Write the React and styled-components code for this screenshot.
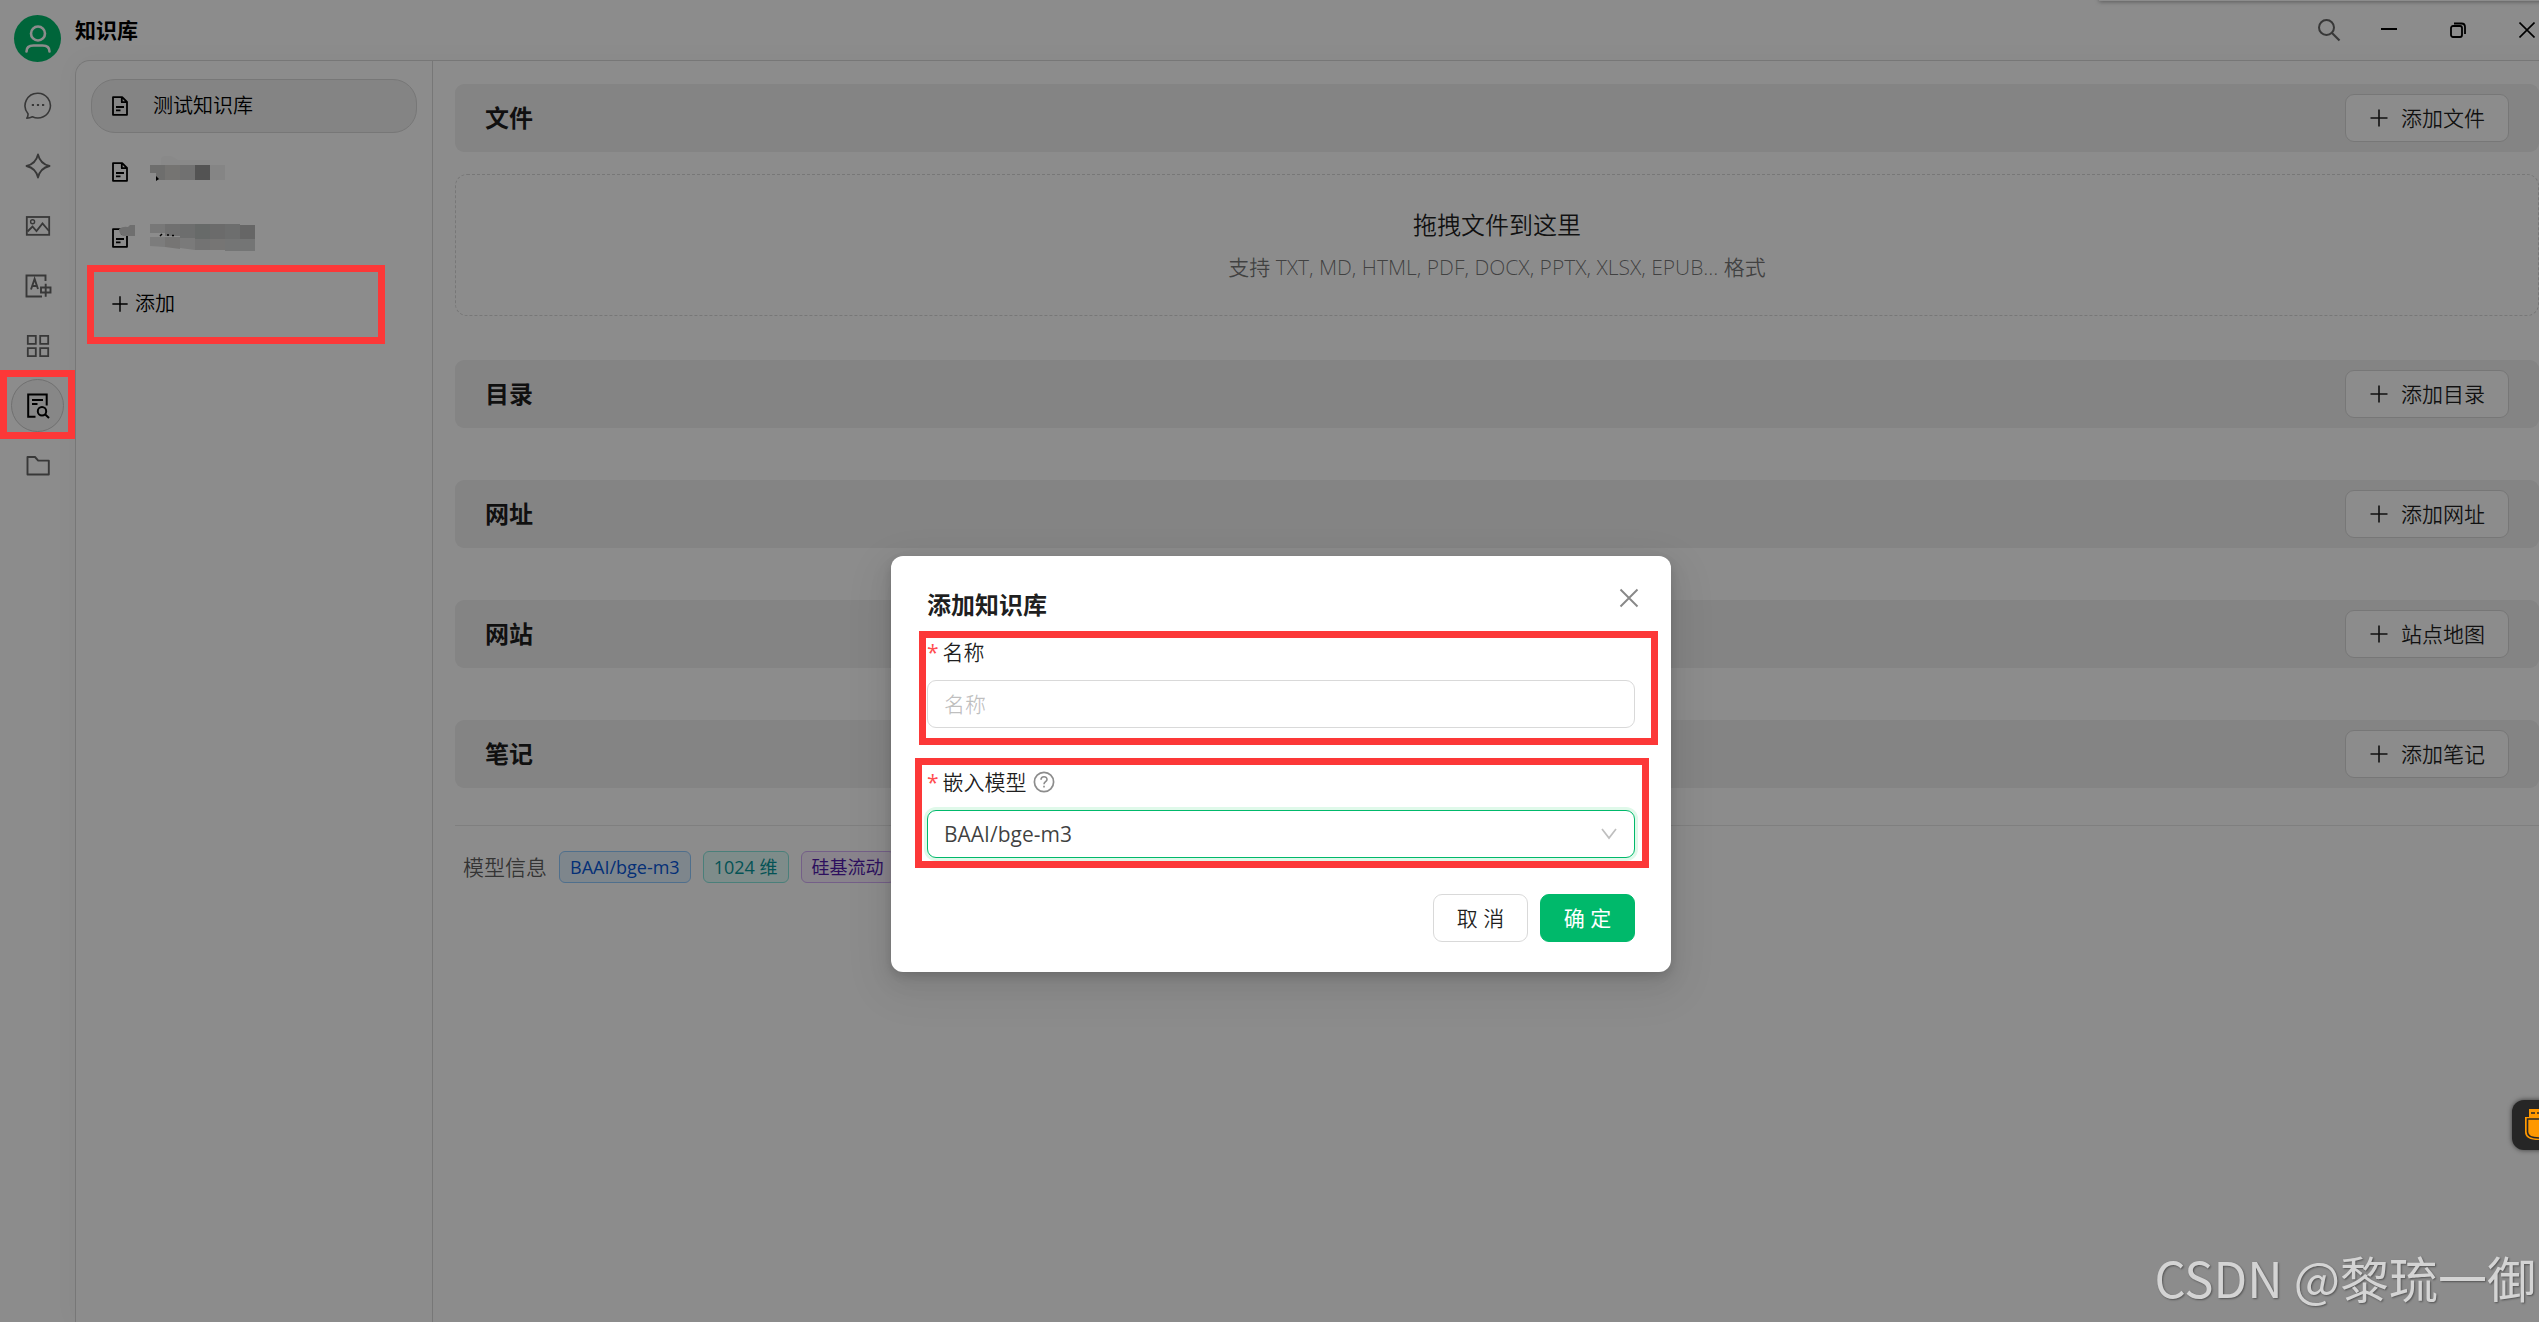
import { useState } from 'react';
import styled, { createGlobalStyle, css } from 'styled-components';

const sections = [
  { title: '目录', action: '添加目录' },
  { title: '网址', action: '添加网址' },
  { title: '网站', action: '站点地图' },
  { title: '笔记', action: '添加笔记' },
];

const PlusIcon = ({ size = 20 }) => (
  <svg width={size} height={size} viewBox="0 0 20 20" fill="none">
    <path d="M10 1.5v17M1.5 10h17" stroke="currentColor" strokeWidth="1.6" />
  </svg>
);

const DocIcon = () => (
  <svg width="18" height="20" viewBox="0 0 18 20" fill="none">
    <path
      d="M2 1.2h9.2L16 6v12.8H2zM10.8 1.2v5H16M5 11h8M5 14.4h4.5"
      stroke="currentColor"
      strokeWidth="1.8"
      strokeLinejoin="round"
    />
  </svg>
);

const UserIcon = () => (
  <svg width="48" height="48" viewBox="0 0 48 48" fill="none">
    <circle cx="24" cy="18.5" r="7" stroke="#fff" strokeWidth="2.6" />
    <path
      d="M12.5 36.5c0-4 3-6 7-6h9c4 0 7 2 7 6"
      stroke="#fff"
      strokeWidth="2.6"
      strokeLinecap="round"
    />
  </svg>
);

const ChatIcon = () => (
  <svg width="28" height="28" viewBox="0 0 28 28" fill="none">
    <path
      d="M14 1.2a12.6 12.4 0 1 1-5.6 23.6c-1.8.9-3.6 1.3-5.6 1.4 1-1.5 1.4-2.8 1.2-4.5A12.5 12.5 0 0 1 14 1.2z"
      stroke="currentColor"
      strokeWidth="1.6"
      strokeLinejoin="round"
    />
    <path d="M7.8 13h2.2M12.9 13h2.2M18 13h2.2" stroke="currentColor" strokeWidth="2" />
  </svg>
);

const SparkleIcon = () => (
  <svg width="28" height="28" viewBox="0 0 28 28" fill="none">
    <path
      d="M14 2.5c1.5 6.5 5 10 11.5 11.5C19 15.5 15.5 19 14 25.5 12.5 19 9 15.5 2.5 14 9 12.5 12.5 9 14 2.5z"
      stroke="currentColor"
      strokeWidth="1.8"
      strokeLinejoin="round"
    />
  </svg>
);

const PictureIcon = () => (
  <svg width="28" height="28" viewBox="0 0 28 28" fill="none">
    <rect x="2.8" y="5" width="22.4" height="17.8" stroke="currentColor" strokeWidth="1.8" />
    <circle cx="8.6" cy="9.7" r="2" stroke="currentColor" strokeWidth="1.4" />
    <path d="M3.5 19.5l5-5 4 4.5 6-7.5 6.5 7.5" stroke="currentColor" strokeWidth="1.8" />
  </svg>
);

const TranslateIcon = () => (
  <svg width="28" height="28" viewBox="0 0 28 28" fill="none">
    <path
      d="M21.5 9V3.5h-19v21H18M7 17.5l3.6-10.5 3.4 10M8.2 14h4.6"
      stroke="currentColor"
      strokeWidth="1.9"
    />
    <path d="M17 15.5h9.5v5H17zM21.7 11.8v13" stroke="currentColor" strokeWidth="1.9" />
  </svg>
);

const GridIcon = () => (
  <svg width="28" height="28" viewBox="0 0 28 28" fill="none">
    <path
      d="M3.8 3.8h8v8h-8zM16.2 3.8h8v8h-8zM3.8 16.2h8v8h-8zM16.2 16.2h8v8h-8z"
      stroke="currentColor"
      strokeWidth="1.8"
    />
  </svg>
);

const KnowledgeIcon = () => (
  <svg width="28" height="28" viewBox="0 0 28 28" fill="none">
    <path
      d="M11.5 24.8H4.2V2.5h18.5v11M8 8h11M8 12h5.5"
      stroke="currentColor"
      strokeWidth="2"
    />
    <circle cx="18" cy="19.3" r="4.2" stroke="currentColor" strokeWidth="2" />
    <path d="M21 22.3l4 3.7" stroke="currentColor" strokeWidth="2" />
  </svg>
);

const FolderIcon = () => (
  <svg width="28" height="28" viewBox="0 0 28 28" fill="none">
    <path
      d="M3.5 5h7.5l3.2 3.6h10.6V22.5H3.5z"
      stroke="currentColor"
      strokeWidth="1.9"
      strokeLinejoin="round"
    />
  </svg>
);

const ShortMosaic = () => (
  <svg width="78" height="32" viewBox="0 0 78 32">
    <path d="M11 2q6-6 17 2h32v6H11z" fill="#fafafa" />
    <path d="M0 9h15v15H6v-7H0z" fill="#c9c9c6" />
    <path d="M6 20l3 3-3 2z" fill="#000" />
    <path d="M15 9h15v15H15z" fill="#d6d4d0" />
    <path d="M30 9h15v15H30z" fill="#cecece" />
    <path d="M45 9h15v15H45z" fill="#979797" />
    <path d="M60 9h15v15H60z" fill="#f2f2f2" />
  </svg>
);

const LongMosaic = () => (
  <svg width="108" height="28" viewBox="0 0 108 28">
    <path d="M0 0h15v9H0z" fill="#dadada" />
    <path d="M15 0h15v12H15z" fill="#ccc" />
    <path d="M30 0h15v14H30zM75 0h15v15H75z" fill="#c6c8c8" />
    <path d="M45 0h15v15H45z" fill="#bcc2c0" />
    <path d="M60 0h15v15H60z" fill="#c4c4c4" />
    <path d="M90 1h15v14H90z" fill="#bababa" />
    <path d="M0 13h15v10l-15-1z" fill="#e2e2e2" />
    <path d="M15 13h15v12l-15-2zM60 15h15v11H60z" fill="#d8d6d4" />
    <path d="M30 14h15v12l-15-2z" fill="#dedede" />
    <path d="M45 15h15v11H45z" fill="#d2d2d2" />
    <path d="M75 15h15v12H75zM90 15h15v12H90z" fill="#d4d6d6" />
    <path d="M10 12l2-2M17 11h2M22 11.5h2" stroke="#000" strokeWidth="1.5" />
  </svg>
);

const navItems = [
  { name: '聊天', icon: <ChatIcon /> },
  { name: '智能体', icon: <SparkleIcon /> },
  { name: '绘画', icon: <PictureIcon /> },
  { name: '翻译', icon: <TranslateIcon /> },
  { name: '小程序', icon: <GridIcon /> },
  { name: '知识库', icon: <KnowledgeIcon />, active: true },
  { name: '文件', icon: <FolderIcon /> },
];

const SectionHead = ({ title, action }) => (
  <SectionBar>
    <SectionTitle>{title}</SectionTitle>
    <AddButton type="button">
      <PlusIcon />
      {action}
    </AddButton>
  </SectionBar>
);

const AddDialog = () => {
  const [name, setName] = useState('');
  const [model, setModel] = useState('BAAI/bge-m3');

  return (
    <Dialog role="dialog" aria-labelledby="dialog-title">
      <CloseButton type="button" aria-label="关闭">
        <svg width="20" height="20" viewBox="0 0 20 20">
          <path d="M1.5 1.5l17 17M18.5 1.5l-17 17" stroke="#888" strokeWidth="1.9" />
        </svg>
      </CloseButton>
      <DialogTitle id="dialog-title">添加知识库</DialogTitle>
      <Fields>
        <Field>
          <Label htmlFor="kb-name">
            <Required>*</Required>名称
          </Label>
          <TextInput
            id="kb-name"
            placeholder="名称"
            value={name}
            onChange={(e) => setName(e.target.value)}
          />
          <NameMark />
        </Field>
        <Field>
          <Label htmlFor="kb-model">
            <Required>*</Required>嵌入模型
            <HelpIcon width="22" height="22" viewBox="0 0 22 22" fill="none">
              <circle cx="11" cy="11" r="9.6" stroke="#8c8c8c" strokeWidth="1.7" />
              <path
                d="M8 8.8c0-4 6-4 6-.4 0 2.3-3 2.3-3 4.8M11 14.8v1.6"
                stroke="#8c8c8c"
                strokeWidth="1.6"
              />
            </HelpIcon>
          </Label>
          <SelectWrap>
            <Select id="kb-model" value={model} onChange={(e) => setModel(e.target.value)}>
              <option>BAAI/bge-m3</option>
            </Select>
            <Arrow width="16" height="12" viewBox="0 0 16 12" fill="none">
              <path d="M1 1l7 9 7-9" stroke="#bfbfbf" strokeWidth="1.7" />
            </Arrow>
          </SelectWrap>
          <ModelMark />
        </Field>
      </Fields>
      <Footer>
        <DialogButton type="button">取 消</DialogButton>
        <DialogButton type="button" $primary>
          确 定
        </DialogButton>
      </Footer>
    </Dialog>
  );
};

const App = () => {
  return (
    <Viewport>
      <GlobalStyle />
      <Window>
        <Sidebar>
          <Avatar>
            <UserIcon />
          </Avatar>
          <Nav>
            {navItems.map((item) => (
              <NavButton key={item.name} type="button" aria-label={item.name} $active={item.active}>
                {item.icon}
                {item.active && <NavMark />}
              </NavButton>
            ))}
          </Nav>
        </Sidebar>
        <Body>
          <TopBar>
            <PageTitle>知识库</PageTitle>
            <SearchButton type="button" aria-label="搜索">
              <svg width="24" height="24" viewBox="0 0 24 24" fill="none">
                <circle cx="9.5" cy="9.5" r="7.5" stroke="currentColor" strokeWidth="2" />
                <path d="M14.5 14.5l8 8" stroke="currentColor" strokeWidth="2.2" />
              </svg>
            </SearchButton>
            <WindowButton type="button" aria-label="最小化">
              <svg width="16" height="16" viewBox="0 0 16 16">
                <path d="M0 7h16" stroke="#000" strokeWidth="2" />
              </svg>
            </WindowButton>
            <WindowButton type="button" aria-label="还原">
              <svg width="16" height="16" viewBox="0 0 16 16" fill="none">
                <rect x="1" y="4" width="11" height="11" rx="2" stroke="#000" strokeWidth="1.8" />
                <path d="M4 1.5h7.5q3.5 0 3.5 3.5v7" stroke="#000" strokeWidth="1.8" />
              </svg>
            </WindowButton>
            <WindowButton type="button" aria-label="关闭窗口">
              <svg width="16" height="16" viewBox="0 0 16 16">
                <path d="M.5.5l15 15M15.5.5l-15 15" stroke="#000" strokeWidth="1.6" />
              </svg>
            </WindowButton>
          </TopBar>
          <Panel>
            <BaseList>
              <BaseItem type="button" $active>
                <DocIcon />
                测试知识库
              </BaseItem>
              <BaseItem type="button" aria-label="知识库二">
                <DocIcon />
                <MosaicSlot>
                  <ShortMosaic />
                </MosaicSlot>
              </BaseItem>
              <BaseItem type="button" aria-label="知识库三">
                <DocIcon />
                <IconSmudge width="18" height="12" viewBox="0 0 18 12">
                  <path d="M1 4q4-3 9-2l2-2h5v11H5q-4-2-4-7z" fill="#cacaca" />
                </IconSmudge>
                <MosaicSlot>
                  <LongMosaic />
                </MosaicSlot>
              </BaseItem>
              <NewBase type="button">
                <PlusIcon size={18} />
                添加
                <NewMark />
              </NewBase>
            </BaseList>
            <Content>
              <SectionHead title="文件" action="添加文件" />
              <DropZone>
                <DropTitle>拖拽文件到这里</DropTitle>
                <DropHint>支持 TXT, MD, HTML, PDF, DOCX, PPTX, XLSX, EPUB... 格式</DropHint>
              </DropZone>
              <SectionList>
                {sections.map((section) => (
                  <SectionHead key={section.title} {...section} />
                ))}
              </SectionList>
              <ModelInfo>
                <InfoLabel>模型信息</InfoLabel>
                <Tag $color="#0958d9" $bg="#e6f4ff" $border="#91caff">
                  BAAI/bge-m3
                </Tag>
                <Tag $color="#08979c" $bg="#e6fffb" $border="#87e8de">
                  1024 维
                </Tag>
                <Tag $color="#531dab" $bg="#f9f0ff" $border="#d3adf7">
                  硅基流动
                </Tag>
              </ModelInfo>
            </Content>
          </Panel>
        </Body>
        <TopShade />
        <Mask>
          <AddDialog />
        </Mask>
        <FloatTool type="button" aria-label="工具">
          <svg width="28" height="32" viewBox="0 0 28 32">
            <path d="M4 0h20v8h4v15q0 8-14 8T0 23V8h4z" fill="#ff9800" />
            <path
              d="M2.5 10h23v13q0 6-11.5 6T2.5 23zM6 4h4M12 4h4M18 4h4"
              fill="none"
              stroke="#262626"
              strokeWidth="1.6"
            />
          </svg>
        </FloatTool>
        <Watermark>CSDN @黎琉一御</Watermark>
      </Window>
    </Viewport>
  );
};

export default App;

const GlobalStyle = createGlobalStyle`
  * {
    box-sizing: border-box;
  }

  body {
    margin: 0;
    background: #fff;
  }

  body, button, input, select {
    font-family: "Open Sans", "Noto Sans CJK SC", sans-serif;
    font-weight: 350;
    color: rgba(0, 0, 0, 0.88);
  }

  button {
    padding: 0;
    border: none;
    background: none;
    cursor: pointer;
  }

  svg {
    display: block;
    flex-shrink: 0;
  }
`;

const Viewport = styled('div')`
  overflow: hidden;
`;

/* the window hangs a little over the right edge of the screen */
const Window = styled('div')`
  position: relative;
  display: flex;
  width: calc(100% + 23px);
  min-height: 100vh;
`;

const Sidebar = styled('aside')`
  display: flex;
  flex-direction: column;
  align-items: center;
  gap: 17px;
  width: 75px;
  padding-top: 15px;
  flex-shrink: 0;
`;

const Avatar = styled('div')`
  display: flex;
  align-items: center;
  justify-content: center;
  width: 47px;
  height: 47px;
  border-radius: 50%;
  background: #00b96b;
`;

const Nav = styled('nav')`
  display: flex;
  flex-direction: column;
  gap: 7px;
`;

const NavButton = styled('button')`
  position: relative;
  display: flex;
  align-items: center;
  justify-content: center;
  width: 53px;
  height: 53px;
  border: 1px solid transparent;
  border-radius: 50%;
  color: #666;

  ${({ $active }) =>
    $active &&
    css`
      border-color: #ccc;
      background: #f6f6f6;
      color: #000;
    `}
`;

const Mark = styled('span')`
  position: absolute;
  z-index: 20;
  border: 7px solid #fc3838;
  pointer-events: none;
`;

const NavMark = styled(Mark)`
  inset: -10px -12px -8px -12px;
`;

const NewMark = styled(Mark)`
  inset: -13px 31px -14px -5px;
`;

const NameMark = styled(Mark)`
  inset: -5px -23px -17px -8px;
`;

const ModelMark = styled(Mark)`
  inset: -8px -14px -10px -12px;
`;

const Body = styled('div')`
  display: flex;
  flex-direction: column;
  flex: 1;
  min-width: 0;
`;

const TopBar = styled('header')`
  display: flex;
  align-items: center;
  height: 60px;
  padding-right: 1px;
`;

const PageTitle = styled('h1')`
  flex: 1;
  margin: 0;
  font-size: 21px;
  line-height: 32px;
  font-weight: 700;
  color: #000;
`;

const SearchButton = styled('button')`
  display: flex;
  align-items: center;
  justify-content: center;
  width: 50px;
  height: 48px;
  color: #666;
`;

const WindowButton = styled('button')`
  display: flex;
  align-items: center;
  justify-content: center;
  width: 69px;
  height: 60px;
`;

const Panel = styled('main')`
  display: flex;
  flex: 1;
  border-top: 1px solid #d9d9d9;
  border-left: 1px solid #d9d9d9;
  border-top-left-radius: 15px;
  box-shadow: 0 0 24px rgba(0, 0, 0, 0.04);
`;

const BaseList = styled('div')`
  display: flex;
  flex-direction: column;
  gap: 12px;
  width: 357px;
  padding: 18px 15px;
  border-right: 1px solid #d9d9d9;
  flex-shrink: 0;
`;

const BaseItem = styled('button')`
  position: relative;
  display: flex;
  align-items: center;
  gap: 24px;
  height: 54px;
  padding: 0 19px;
  border: 1px solid transparent;
  border-radius: 24px;
  font-size: 20px;
  line-height: 30px;
  color: #000;

  ${({ $active }) =>
    $active &&
    css`
      border-color: #d9d9d9;
      background: #f0f0f0;
    `}
`;

const MosaicSlot = styled('span')`
  display: flex;
  margin-left: -3px;
`;

const IconSmudge = styled('svg')`
  position: absolute;
  top: 13px;
  left: 26px;
`;

const NewBase = styled(BaseItem)`
  gap: 6px;
`;

const Content = styled('div')`
  flex: 1;
  min-width: 0;
  padding: 23px 23px 23px 22px;
`;

const SectionBar = styled('div')`
  display: flex;
  align-items: center;
  justify-content: space-between;
  height: 68px;
  padding: 0 30px;
  border-radius: 9px;
  background: #f0f0f0;
`;

const SectionTitle = styled('h2')`
  margin: 0;
  font-size: 24px;
  line-height: 36px;
  font-weight: 700;
`;

const AddButton = styled('button')`
  display: flex;
  align-items: center;
  gap: 12px;
  height: 48px;
  padding: 0 23px;
  border: 1px solid #d9d9d9;
  border-radius: 9px;
  background: #fff;
  font-size: 21px;
  line-height: 32px;
`;

const DropZone = styled('div')`
  display: flex;
  flex-direction: column;
  align-items: center;
  justify-content: center;
  gap: 8px;
  height: 142px;
  margin-top: 22px;
  border: 1px dashed #d9d9d9;
  border-radius: 12px;
`;

const DropTitle = styled('p')`
  margin: 0;
  font-size: 24px;
  line-height: 36px;
`;

const DropHint = styled('p')`
  margin: 0;
  font-size: 21px;
  line-height: 32px;
  color: rgba(0, 0, 0, 0.55);
`;

const SectionList = styled('div')`
  display: flex;
  flex-direction: column;
  gap: 52px;
  margin-top: 44px;
`;

const ModelInfo = styled('div')`
  display: flex;
  align-items: center;
  gap: 12px;
  margin-top: 37px;
  padding: 25px 8px;
  border-top: 1px solid #e8e8e8;
`;

const InfoLabel = styled('span')`
  font-size: 21px;
  line-height: 32px;
  color: rgba(0, 0, 0, 0.65);
`;

const Tag = styled('span')`
  padding: 0 10px;
  border: 1px solid ${({ $border }) => $border};
  border-radius: 6px;
  background: ${({ $bg }) => $bg};
  color: ${({ $color }) => $color};
  font-size: 18px;
  font-weight: 400;
  line-height: 30px;
`;

const TopShade = styled('div')`
  position: absolute;
  top: -4px;
  right: 0;
  width: 463px;
  height: 5px;
  box-shadow: 0 1px 4px rgba(0, 0, 0, 0.35);
`;

const Mask = styled('div')`
  position: absolute;
  inset: 0;
  z-index: 10;
  display: flex;
  justify-content: center;
  align-items: flex-start;
  padding-top: 556px;
  background: rgba(0, 0, 0, 0.45);
`;

const Dialog = styled('div')`
  position: relative;
  width: 780px;
  padding: 31px 36px 30px;
  border-radius: 12px;
  background: #fff;
  box-shadow: 0 9px 24px rgba(0, 0, 0, 0.08), 0 4px 9px rgba(0, 0, 0, 0.12),
    0 14px 42px 12px rgba(0, 0, 0, 0.05);
`;

const CloseButton = styled('button')`
  position: absolute;
  top: 18px;
  right: 18px;
  display: flex;
  align-items: center;
  justify-content: center;
  width: 48px;
  height: 48px;
`;

const DialogTitle = styled('h2')`
  margin: 0 0 13px;
  font-size: 24px;
  line-height: 36px;
  font-weight: 700;
`;

const Fields = styled('div')`
  display: flex;
  flex-direction: column;
  gap: 38px;
`;

const Field = styled('div')`
  position: relative;
  display: flex;
  flex-direction: column;
  gap: 12px;
`;

const Label = styled('label')`
  display: flex;
  align-items: center;
  font-size: 21px;
  line-height: 32px;
`;

const Required = styled('span')`
  margin-right: 4px;
  color: #ff4d4f;
  font-weight: 400;
`;

const HelpIcon = styled('svg')`
  margin-left: 6px;
`;

const control = css`
  width: 100%;
  height: 48px;
  padding: 0 16px;
  border: 1px solid #d9d9d9;
  border-radius: 9px;
  background: #fff;
  font-size: 21px;
  line-height: 32px;
  outline: none;
`;

const TextInput = styled('input')`
  ${control}

  &::placeholder {
    color: rgba(0, 0, 0, 0.25);
  }
`;

const SelectWrap = styled('div')`
  position: relative;
`;

const Select = styled('select')`
  ${control}
  display: block;
  appearance: none;
  border-color: #00b96b;
  box-shadow: 0 0 0 3px #e0f9ea;
  color: rgba(0, 0, 0, 0.75);
  font-weight: 400;
`;

const Arrow = styled('svg')`
  position: absolute;
  top: 18px;
  right: 18px;
  pointer-events: none;
`;

const Footer = styled('div')`
  display: flex;
  justify-content: flex-end;
  gap: 12px;
  margin-top: 36px;
`;

const DialogButton = styled('button')`
  width: 95px;
  height: 48px;
  border: 1px solid #d9d9d9;
  border-radius: 9px;
  font-size: 21px;
  line-height: 32px;

  ${({ $primary }) =>
    $primary &&
    css`
      border-color: #00b96b;
      background: #00b96b;
      color: #fff;
      font-weight: 400;
    `}
`;

const FloatTool = styled('button')`
  position: absolute;
  right: 0;
  bottom: 172px;
  z-index: 20;
  display: flex;
  align-items: center;
  width: 50px;
  height: 50px;
  padding-left: 13px;
  border-radius: 12px;
  background: #262626;
  box-shadow: 0 0 5px rgba(0, 0, 0, 0.6);
`;

const Watermark = styled('div')`
  position: absolute;
  right: 26px;
  bottom: 9px;
  z-index: 20;
  font-family: 'Noto Sans CJK SC', sans-serif;
  font-size: 49px;
  font-weight: 400;
  line-height: 72px;
  color: #d4d4d4;
  text-shadow: 1px 1px 2px rgba(0, 0, 0, 0.4);
`;
